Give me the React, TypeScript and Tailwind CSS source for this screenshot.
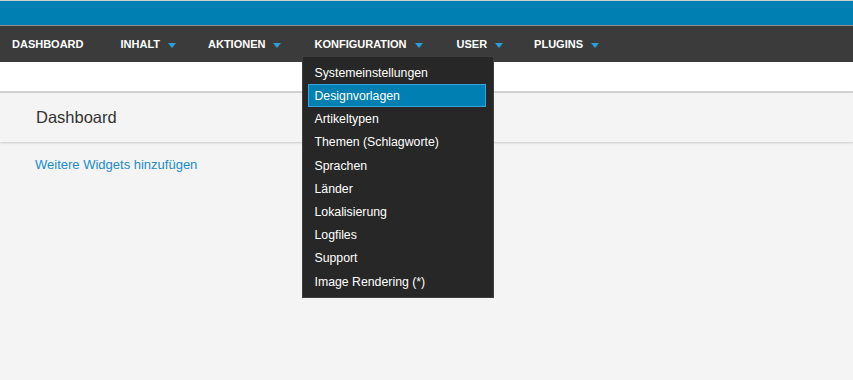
import React from "react";

const Arrow = () => (
  <svg width="8" height="5" viewBox="0 0 8 5" className="ml-[8px] mt-[2px] block">
    <polygon points="0,0 8,0 4,5" fill="#2d9fd8" />
  </svg>
);

const navItems: { label: string; arrow: boolean; pad: string }[] = [
  { label: "DASHBOARD", arrow: false, pad: "pr-[25px]" },
  { label: "INHALT", arrow: true, pad: "pr-[20px]" },
  { label: "AKTIONEN", arrow: true, pad: "pr-[21px]" },
  { label: "KONFIGURATION", arrow: true, pad: "pr-[22px]" },
  { label: "USER", arrow: true, pad: "pr-[19px]" },
  { label: "PLUGINS", arrow: true, pad: "pr-[20px]" },
];

const menu = [
  "Systemeinstellungen",
  "Designvorlagen",
  "Artikeltypen",
  "Themen (Schlagworte)",
  "Sprachen",
  "Länder",
  "Lokalisierung",
  "Logfiles",
  "Support",
  "Image Rendering (*)",
];

export default function App() {
  return (
    <div
      className="w-[853px] h-[380px] overflow-hidden bg-[#f4f4f4] flex flex-col"
      style={{ fontFamily: '"Liberation Sans", Arial, sans-serif' }}
    >
      <div className="h-[1px] bg-[#cfcfcf] shrink-0" />
      <div className="h-[24px] bg-[#0080b2] shrink-0" />
      <div className="h-[1px] bg-[#8f8f8f] shrink-0" />
      <nav className="h-[36px] bg-[#3b3b3b] shrink-0 flex items-stretch relative z-10">
        {navItems.map((it) => (
          <div key={it.label} className={`relative flex items-center pl-[12px] ${it.pad}`}>
            <span className="text-[11px] font-bold text-white leading-none">{it.label}</span>
            {it.arrow && <Arrow />}
            {it.label === "KONFIGURATION" && (
              <div className="absolute left-0 top-[30px] w-[192px] bg-[#272727] border border-[#3e3e3e] pl-[5px] pr-[7px] py-[4px]">
                {menu.map((m) => (
                  <div
                    key={m}
                    className={`h-[23.2px] w-[178px] flex items-center pl-[5px] pt-[1px] text-[12.3px] text-white border ${
                      m === "Designvorlagen" ? "bg-[#0080b2] border-[#33a6dd]" : "border-transparent"
                    }`}
                  >
                    {m}
                  </div>
                ))}
              </div>
            )}
          </div>
        ))}
      </nav>
      <div className="h-[29px] bg-white shrink-0" />
      <div className="h-[2px] bg-[#d2d2d2] shrink-0" />
      <div className="h-[49px] shrink-0 bg-[#f4f4f4] flex items-center pl-[36px] shadow-[0_1px_2px_rgba(0,0,0,0.18)]">
        <span className="text-[16.5px] text-[#333333]">Dashboard</span>
      </div>
      <div className="pt-[10px] pl-[35px]">
        <span className="text-[13px] text-[#1b8ccb]">Weitere Widgets hinzufügen</span>
      </div>
    </div>
  );
}
